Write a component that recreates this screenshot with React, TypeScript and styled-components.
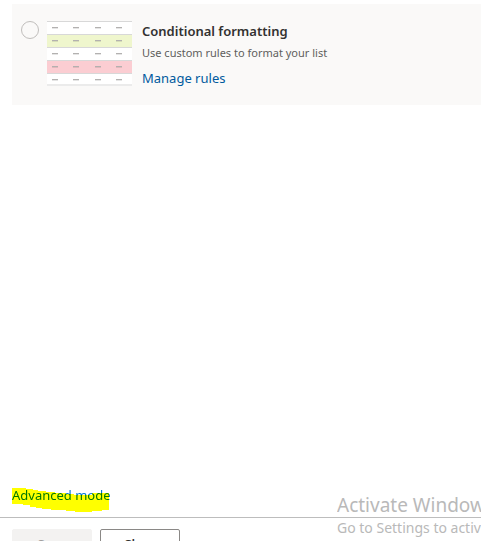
import React from "react";
import styled, { createGlobalStyle } from "styled-components";

const GlobalStyle = createGlobalStyle`
  *, *::before, *::after { box-sizing: border-box; }
  body {
    margin: 0;
    background: #fff;
    color: #323130;
    font-family: "Noto Sans", "Open Sans", sans-serif;
    font-size: 13px;
    overflow: hidden;
  }
`;

const Panel = styled.div`
  display: flex;
  flex-direction: column;
  height: 100vh;
  overflow: hidden;
  padding-top: 4px;
`;

const RuleCard = styled.section`
  display: flex;
  align-items: flex-start;
  margin-left: 12px;
  padding: 17px 8px 17px 9px;
  background: #faf9f8;
`;

const Radio = styled.input`
  appearance: none;
  flex: none;
  width: 18px;
  height: 18px;
  margin: 0 8px 0 0;
  border: 1px solid #c0bebc;
  border-radius: 50%;
  background: #faf9f8;
  &:checked { border: 5px solid #0078d4; }
`;

const Preview = styled.svg`
  flex: none;
  display: block;
  width: 85px;
  height: 65px;
  margin-right: 10px;
`;

const CardText = styled.div`
  min-width: 0;
`;

const Title = styled.label`
  display: block;
  font-weight: 600;
  line-height: 20px;
`;

const Description = styled.p`
  margin: 0;
  color: #605e5c;
  font-size: 11px;
  line-height: 24px;
`;

const Link = styled.a`
  color: #005a9e;
  line-height: 20px;
  text-decoration: none;
  &:hover { text-decoration: underline; }
`;

const ManageLink = styled(Link)`
  display: block;
  margin-top: 3px;
`;

const Spacer = styled.div`
  flex: 1;
`;

const AdvancedRow = styled.div`
  position: relative;
  isolation: isolate;
  display: flex;
  padding: 0 12px 12px;
`;

const AdvancedLink = styled(Link)`
  color: #0078d4;
`;

const Marker = styled.svg`
  position: absolute;
  left: 12px;
  top: 3px;
  width: 98px;
  height: 24px;
  mix-blend-mode: multiply;
  pointer-events: none;
`;

const Footer = styled.footer`
  display: flex;
  flex: none;
  align-items: flex-start;
  gap: 8px;
  height: 24px;
  padding: 11px 12px 0;
  border-top: 1px solid #bdbdbd;
`;

const Button = styled.button`
  flex: none;
  width: 80px;
  height: 32px;
  padding: 0 0 2px;
  border: 1px solid #8a8886;
  border-radius: 2px;
  background: #fff;
  color: #323130;
  font: 600 13px/20px "Open Sans", "Noto Sans", sans-serif;
  &:disabled {
    border-color: #f3f2f1;
    background: #f3f2f1;
    color: #a19f9d;
  }
`;

const Watermark = styled.aside`
  position: absolute;
  right: 0;
  bottom: 0;
  width: 144px;
  height: 48px;
  overflow: hidden;
  color: #b9b9b9;
  white-space: nowrap;
  pointer-events: none;
`;

const WatermarkTitle = styled.div`
  font-size: 19px;
  line-height: 24px;
`;

const WatermarkText = styled.div`
  font-size: 14px;
  line-height: 22px;
`;

const rows = [
  { y: 0, fill: "#ffffff" },
  { y: 13, fill: "#eff6cd" },
  { y: 26, fill: "#ffffff" },
  { y: 39, fill: "#fbcdd2" },
  { y: 52, fill: "#ffffff" },
];

function RulesPreview() {
  return (
    <Preview viewBox="0 0 85 65" aria-hidden="true" shapeRendering="crispEdges">
      {rows.map(({ y, fill }) => (
        <g key={y}>
          <rect x="0" y={y} width="85" height="13" fill={fill} />
          <rect x="0" y={y} width="85" height="1" fill="#d8d8d8" />
          {[5, 26, 48, 69].map((x) => (
            <g key={x}>
              <rect x={x} y={y + 6} width="6" height="1" fill="#b3b1b0" />
              <rect x={x} y={y + 7} width="6" height="1" fill="#000" opacity="0.1" />
            </g>
          ))}
        </g>
      ))}
      <rect x="0" y="63" width="85" height="2" fill="#ebebeb" />
    </Preview>
  );
}

export default function App() {
  return (
    <>
      <GlobalStyle />
      <Panel>
        <RuleCard>
          <Radio type="radio" id="conditional" name="format" />
          <RulesPreview />
          <CardText>
            <Title htmlFor="conditional">Conditional formatting</Title>
            <Description>Use custom rules to format your list</Description>
            <ManageLink href="#rules">Manage rules</ManageLink>
          </CardText>
        </RuleCard>
        <Spacer />
        <AdvancedRow>
          <AdvancedLink href="#advanced">Advanced mode</AdvancedLink>
          <Marker viewBox="0 0 98 24" aria-hidden="true">
            <path
              d="M0 0H14V1H21V2H26V3H34V4H43V5H54V6H62V7H80V5H97V22H90V23H80V24H63V23H54V22H39V21H30V20H24V19H18V17H11V16H0Z"
              fill="#ffff00"
            />
          </Marker>
        </AdvancedRow>
        <Footer>
          <Button type="button" disabled>Save</Button>
          <Button type="button">Close</Button>
        </Footer>
      </Panel>
      <Watermark>
        <WatermarkTitle>Activate Windows</WatermarkTitle>
        <WatermarkText>Go to Settings to activate Windows.</WatermarkText>
      </Watermark>
    </>
  );
}
